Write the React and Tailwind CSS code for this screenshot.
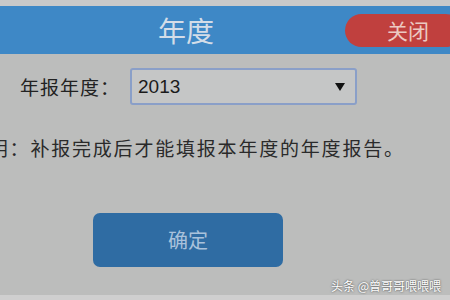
import React from 'react';

const cjk = { fontFamily: '"Noto Sans CJK SC", "Noto Sans", sans-serif' };

export default function App() {
    return (
        <div className="relative w-[450px] h-[300px] overflow-hidden bg-[#bcbdbc] flex flex-col" style={cjk}>
            {/* top strip */}
            <div className="h-[6px] bg-[#c9c9c9] shrink-0" />

            {/* header */}
            <div className="h-[48px] shrink-0 bg-[#3e88c6] flex items-center pl-[158px]">
                <span className="text-[28px] leading-none text-[#d3dde8]">年度</span>
                <button className="ml-auto mr-[-12px] w-[117px] h-[33px] rounded-full bg-[#c0403e] text-[#ecc9c2] text-[21px] leading-none flex items-center pl-[42px]">
                    关闭
                </button>
            </div>

            {/* year row */}
            <div className="mt-[14px] pl-[20px] flex items-center">
                <span className="w-[110px] shrink-0 whitespace-nowrap text-[19px] leading-none text-[#222] tracking-[1px]">年报年度：</span>
                <div className="w-[227px] h-[37px] border-2 border-[#8a9fc8] rounded-[3px] bg-[#c5c6c6] flex items-center pl-[6px] pr-[10px]">
                    <span className="text-[19px] leading-none text-[#1a1a1a]" style={{ fontFamily: '"Liberation Sans", Arial, sans-serif' }}>2013</span>
                    <svg className="ml-auto" width="10" height="8" viewBox="0 0 10 8">
                        <path d="M0 0 L10 0 L5 8 Z" fill="#111" />
                    </svg>
                </div>
            </div>

            {/* note, cut off at the left edge as in the dialog */}
            <div className="mt-[33px] ml-[-32px] whitespace-nowrap text-[19px] leading-[20px] text-[#2a2a2a] tracking-[1.8px]">
                说明：补报完成后才能填报本年度的年度报告。
            </div>

            {/* confirm */}
            <div className="mt-[55px] pl-[93px]">
                <button className="w-[190px] h-[54px] rounded-[7px] bg-[#2f6ca3] text-[#a9c2dc] text-[20px] leading-none flex items-center justify-center">
                    确定
                </button>
            </div>

            <div className="mt-auto h-[5px] bg-[#cfcfcf]" />

            {/* watermark */}
            <div className="absolute right-[9px] bottom-[8px] text-[12px] leading-none text-white [text-shadow:0_0_2px_#333]">
                头条 @曾哥哥喂喂喂
            </div>
        </div>
    );
}
